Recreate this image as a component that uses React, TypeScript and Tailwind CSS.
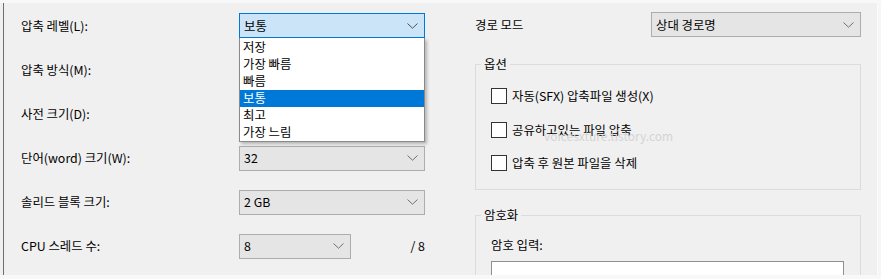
import React from "react";

const Chevron = ({ color = "#606060" }: { color?: string }) => (
  <svg width="11" height="6" viewBox="0 0 11 6" className="shrink-0">
    <polyline points="0.5,0.5 5.5,5.2 10.5,0.5" fill="none" stroke={color} strokeWidth="1" />
  </svg>
);

const Combo = ({ value, w, open = false }: { value: string; w: string; open?: boolean }) => (
  <div
    className={`${w} h-[25px] flex items-center justify-between pl-[4px] pr-[6px] border ${
      open ? "bg-[#cce4f7] border-[#0078d7]" : "bg-[#e5e5e5] border-[#adadad]"
    }`}
  >
    <span>{value}</span>
    <Chevron color={open ? "#505050" : "#707070"} />
  </div>
);

const items = ["저장", "가장 빠름", "빠름", "보통", "최고", "가장 느림"];

const Row = ({ label, children }: { label: string; children: React.ReactNode }) => (
  <div className="flex items-center h-[25px]">
    <div className="w-[218px] shrink-0">{label}</div>
    {children}
  </div>
);

const Check = ({ label }: { label: string }) => (
  <div className="flex items-center h-[16px] gap-[5px]">
    <div className="w-[16px] h-[16px] bg-white border border-[#333333] shrink-0" />
    <span>{label}</span>
  </div>
);

export default function App() {
  return (
    <div
      className="w-[881px] h-[279px] bg-[#f0f0f0] flex flex-col overflow-hidden text-[12.4px] leading-[16px] text-[#000000]"
      style={{ fontFamily: '"Noto Sans CJK KR", "Noto Sans", sans-serif' }}
    >
      <div className="h-[3px] bg-[#f8f8f8] shrink-0" />
      <div className="flex h-[272px] shrink-0">
        <div className="w-[3px] shrink-0" />
        <div className="w-[1px] bg-[#6e6e6e] shrink-0" />
        <div className="w-[873px] flex overflow-hidden relative">
          {/* Left column */}
          <div className="w-[421px] pl-[17px] pt-[10px] flex flex-col gap-[19.2px] shrink-0">
            <Row label="압축 레벨(L):">
              <div className="relative">
                <Combo value="보통" w="w-[186px]" open />
                <div className="absolute left-0 top-[25px] w-[186px] bg-white border border-t-0 border-[#8a8a8a] pt-[1px] shadow-[2px_2px_3px_rgba(0,0,0,0.25)] z-10">
                  {items.map((it) => (
                    <div
                      key={it}
                      className={`h-[17px] leading-[17px] pl-[3px] ${
                        it === "보통" ? "bg-[#0078d7] text-white" : "text-[#000000]"
                      }`}
                    >
                      {it}
                    </div>
                  ))}
                </div>
              </div>
            </Row>
            <Row label="압축 방식(M):">
              <Combo value="" w="w-[186px]" />
            </Row>
            <Row label="사전 크기(D):">
              <Combo value="" w="w-[186px]" />
            </Row>
            <Row label="단어(word) 크기(W):">
              <Combo value="32" w="w-[186px]" />
            </Row>
            <Row label="솔리드 블록 크기:">
              <Combo value="2 GB" w="w-[186px]" />
            </Row>
            <Row label="CPU 스레드 수:">
              <Combo value="8" w="w-[112px]" />
              <div className="w-[74px] text-right">/ 8</div>
            </Row>
          </div>

          <div className="w-[50px] shrink-0" />

          {/* Right column */}
          <div className="w-[386px] pt-[9px] flex flex-col shrink-0">
            <div className="flex items-center h-[25px]">
              <div className="w-[176px] shrink-0">경로 모드</div>
              <Combo value="상대 경로명" w="w-[210px]" />
            </div>

            <fieldset className="mt-[19px] border border-[#dcdcdc]">
              <legend className="ml-[5px] px-[3px] leading-[16px]">옵션</legend>
              <div className="pl-[15px] pt-[16px] pb-[18px] flex flex-col gap-[17.5px]">
                <Check label="자동(SFX) 압축파일 생성(X)" />
                <Check label="공유하고있는 파일 압축" />
                <Check label="압축 후 원본 파일을 삭제" />
              </div>
            </fieldset>

            <fieldset className="mt-[17px] border border-[#dcdcdc] h-[80px]">
              <legend className="ml-[5px] px-[3px] leading-[16px]">암호화</legend>
              <div className="pl-[15px] pt-[14px] flex flex-col gap-[8px]">
                <div>암호 입력:</div>
                <div className="w-[353px] h-[23px] bg-white border border-[#8f8f8f]" />
              </div>
            </fieldset>
          </div>

          <span className="absolute left-[540px] top-[125px] text-[#d4d4d4] text-[12px] leading-[16px] pointer-events-none">
            voicesxture.tistory.com
          </span>
        </div>
        <div className="w-[1px] bg-[#fbfbfb] shrink-0" />
        <div className="w-[3px] bg-[#f6f6f6] shrink-0" />
      </div>
      <div className="h-[4px] bg-[#f8f8f8] shrink-0" />
    </div>
  );
}
